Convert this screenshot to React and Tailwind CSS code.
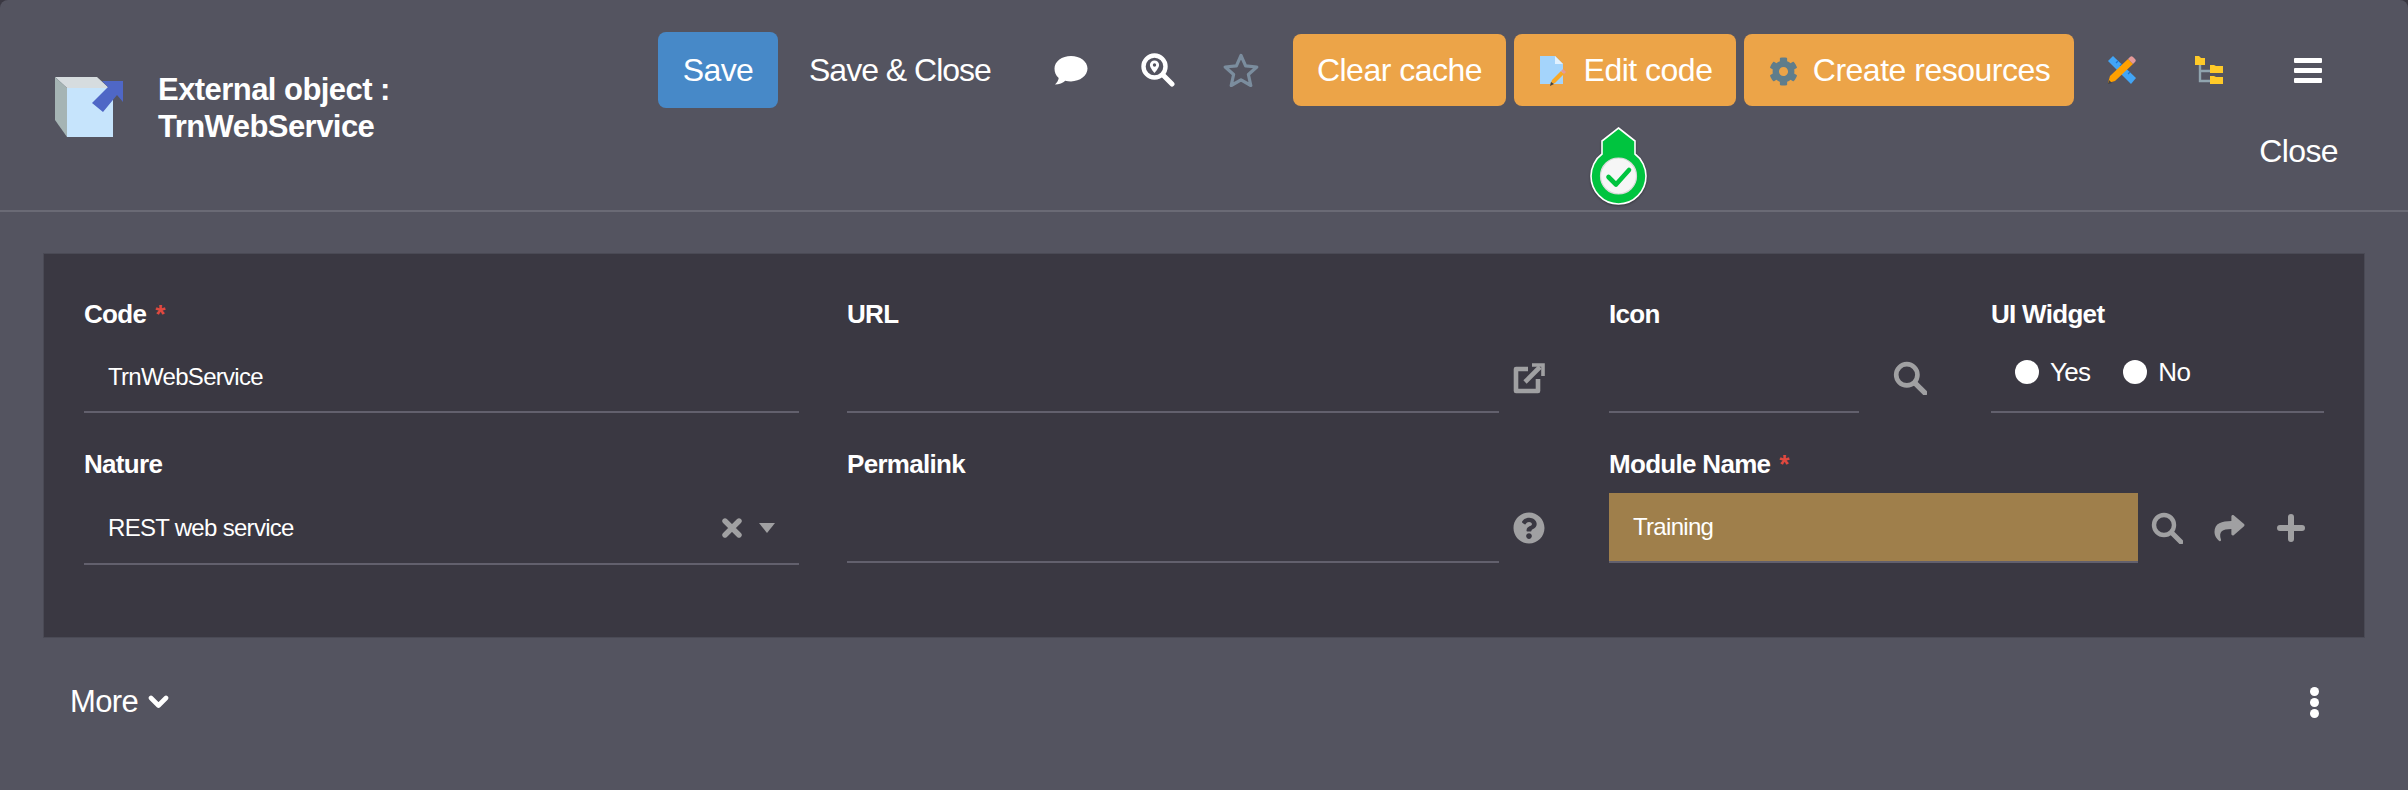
import React from "react";
import { FaCog, FaShare, FaQuestionCircle } from "react-icons/fa";

const font = { fontFamily: '"Liberation Sans", Arial, sans-serif' };

function Search({ className = "" }) {
  return (
    <svg viewBox="0 0 32 32" className={className} fill="none" stroke="#a0a0a2" strokeWidth="4.4" strokeLinecap="round">
      <circle cx="13" cy="13" r="10" />
      <path d="M21 21l9 9" strokeWidth="5" />
    </svg>
  );
}

function CubeIcon() {
  return (
    <svg viewBox="0 0 68 60" className="w-[68px] h-[60px]">
      <path d="M0 0h42l12 11H12z" fill="#d6dcdf" />
      <path d="M0 0l12 11v49L0 43z" fill="#a5b4b4" />
      <path d="M12 11h46v49H12z" fill="#c6e4fc" />
      <path d="M47 4h21v21l-6-7-14 17-11-9 16-16z" fill="#4f67c6" />
    </svg>
  );
}

function Orange({ children, className = "" }) {
  return (
    <button className={"h-[72px] rounded-lg bg-[#eca448] text-white text-[32px] tracking-[-0.5px] flex items-center justify-center " + className}>
      {children}
    </button>
  );
}

function Label({ children, required }) {
  return (
    <div className="text-white font-bold text-[26px] tracking-[-0.7px] leading-[28px] h-[28px]">
      {children}
      {required && <span className="text-[#e0493f] ml-[9px]">*</span>}
    </div>
  );
}

function Underlined({ children, className = "" }) {
  return (
    <div className={"flex items-center border-b-2 border-[#62606d] text-white text-[24px] tracking-[-0.7px] " + className}>
      {children}
    </div>
  );
}

export default function App() {
  return (
    <div className="h-[790px] bg-[#3a3842] overflow-hidden" style={font}>
      <div className="relative h-[790px] rounded-t-lg bg-[#545460]">
        <header className="flex h-[212px] border-b-2 border-[#6a6a75]">
          <div className="w-[658px] shrink-0 flex items-start pt-[77px] pl-[55px]">
            <CubeIcon />
            <div className="ml-[35px] -mt-[6px] text-white font-bold text-[31px] leading-[37px] tracking-[-0.55px]">
              <div>External object :</div>
              <div>TrnWebService</div>
            </div>
          </div>
          <div className="flex-1 flex flex-col">
            <div className="flex items-center h-[76px] mt-[32px]">
              <button className="w-[120px] h-[76px] rounded-lg bg-[#4789c8] text-white text-[32px] tracking-[-0.6px]">Save</button>
              <span className="ml-[31px] w-[181px] text-white text-[32px] tracking-[-1px] whitespace-nowrap">Save &amp; Close</span>
              <svg viewBox="0 0 34 30" className="ml-[64px] w-[34px] h-[30px] -mt-[1px]">
                <path d="M17 1c9 0 16.5 5.4 16.5 12.6S26 26.400 17 26.400c-2 0-4-.3-5.700-.7C9 27.800 5 29.400 1 29.500c2-1.700 3.400-4 3.700-6.500C1.800 20.500.5 17.300.5 13.600.5 6.400 8 1 17 1z" fill="#fff" />
              </svg>
              <svg viewBox="0 0 34 34" className="ml-[53px] w-[34px] h-[34px] -mt-[1px]" fill="none" stroke="#fff" strokeWidth="4.4" strokeLinecap="round">
                <circle cx="13.5" cy="13.5" r="11" />
                <path d="M22 22l9 9" strokeWidth="5" />
                <path d="M13.5 7.5a4.6 4.6 0 0 1 4.6 4.6c0 3-4.6 8-4.6 8s-4.6-5-4.6-8a4.6 4.6 0 0 1 4.6-4.6z" fill="#fff" stroke="none" />
                <circle cx="13.5" cy="12" r="1.7" fill="#545460" stroke="none" />
              </svg>
              <svg viewBox="0 0 36 34" className="ml-[48px] w-[36px] h-[34px] -mt-[1px]" fill="none" stroke="#7b8d9e" strokeWidth="3.2" strokeLinejoin="round">
                <path d="M18 2.5l4.6 10.3 11.2 1.2-8.4 7.5 2.4 11-9.8-5.7-9.8 5.7 2.4-11L2.2 14l11.2-1.2z" />
              </svg>
              <Orange className="ml-[34px] w-[213px]">Clear cache</Orange>
              <Orange className="ml-[8px] w-[222px]">
                <svg viewBox="0 0 26 30" className="w-[26px] h-[30px] mr-[18px] ml-[2px] mt-[2px]">
                  <path d="M0 0h15l8 8v20H0z" fill="#a4d4fb" />
                  <path d="M15 0l8 8h-8z" fill="#e1f1fe" />
                  <path d="M10 29l2-5 9-9 3 3-9 9z" fill="#f9a825" />
                  <path d="M21 15l2-2 3 3-2 2z" fill="#e59a9a" />
                  <path d="M10 30l1-4 3 2z" fill="#444" />
                </svg>
                Edit code
              </Orange>
              <Orange className="ml-[8px] w-[330px] tracking-[-0.4px]">
                <FaCog className="w-[29px] h-[29px] text-[#607d8b] mr-[15px] ml-[1px] mt-[2px]" />
                Create resources
              </Orange>
              <svg viewBox="0 0 28 28" className="ml-[34px] w-[28px] h-[28px]">
                <path d="M5 0l23 22-5 6L0 5z" fill="#42a5f5" />
                <path d="M8 7l2-2M12 10l2-2M16 14l2-2M20 18l2-2" stroke="#1976d2" strokeWidth="1.2" />
                <path d="M0 27l2-7L20 3l5 5L7 25z" fill="#ffa000" />
                <path d="M20 3l2-2c1-1 2-1 3 0l2 2c1 1 1 2 0 3l-2 2z" fill="#e59a9a" />
                <path d="M0 28l1-4 3 3z" fill="#444" />
              </svg>
              <svg viewBox="0 0 28 28" className="ml-[59px] w-[28px] h-[28px]">
                <path d="M5 8v17h10M5 15h10" stroke="#90a4ae" strokeWidth="2.4" fill="none" />
                <path d="M0 0h4l2 2h4v7H0z" fill="#ffca28" />
                <path d="M15 9h4l2 1h7v7H15z" fill="#ffca28" />
                <path d="M15 20h4l2 1h7v7H15z" fill="#ffca28" />
              </svg>
              <div className="ml-[71px] w-[28px] flex flex-col gap-[5px]">
                <div className="h-[5px] bg-white rounded-[1px]" />
                <div className="h-[5px] bg-white rounded-[1px]" />
                <div className="h-[5px] bg-white rounded-[1px]" />
              </div>
            </div>
            <div className="mt-[24px] pr-[70px] text-right text-white text-[32px] tracking-[-0.6px] leading-[38px]">Close</div>
          </div>
        </header>

        <section className="mt-[41px] mx-[43px] h-[385px] bg-[#3a3842] border border-[#4a4a55] pl-[40px] pt-[46px]">
          <div className="flex">
            <div className="w-[715px]">
              <Label required>Code</Label>
              <Underlined className="h-[70px] mt-[15px] pl-[24px]">TrnWebService</Underlined>
            </div>
            <div className="w-[652px] ml-[48px]">
              <Label>URL</Label>
              <Underlined className="h-[70px] mt-[15px]" />
            </div>
            <svg viewBox="0 0 32 32" className="w-[32px] h-[32px] ml-[14px] mt-[62px]" fill="none" stroke="#a0a0a2" strokeWidth="4.6">
              <path d="M15 7H3v22h22V17" strokeLinejoin="round" />
              <path d="M12 20L27 5" />
              <path d="M19 3h11v11" strokeWidth="3.6" />
            </svg>
            <div className="w-[250px] ml-[64px]">
              <Label>Icon</Label>
              <Underlined className="h-[70px] mt-[15px]" />
            </div>
            <Search className="w-[34px] h-[34px] ml-[34px] mt-[61px] shrink-0" />
            <div className="w-[333px] ml-[64px]">
              <Label>UI Widget</Label>
              <Underlined className="h-[70px] mt-[15px] pl-[24px] pb-[10px]">
                <span className="w-[24px] h-[24px] rounded-full bg-white" />
                <span className="ml-[11px] text-[26px]">Yes</span>
                <span className="ml-[33px] w-[24px] h-[24px] rounded-full bg-white" />
                <span className="ml-[11px] text-[26px]">No</span>
              </Underlined>
            </div>
          </div>
          <div className="flex mt-[37px]">
            <div className="w-[715px]">
              <Label>Nature</Label>
              <Underlined className="h-[72px] mt-[15px] pl-[24px] pr-[24px]">
                <span className="flex-1">REST web service</span>
                <svg viewBox="0 0 20 20" className="w-[20px] h-[20px]" stroke="#a0a0a2" strokeWidth="5.4" strokeLinecap="round">
                  <path d="M3 3l14 14M17 3L3 17" />
                </svg>
                <svg viewBox="0 0 16 10" className="ml-[17px] w-[16px] h-[10px]"><path d="M0 0h16l-8 10z" fill="#a0a0a2" /></svg>
              </Underlined>
            </div>
            <div className="w-[652px] ml-[48px]">
              <Label>Permalink</Label>
              <Underlined className="h-[70px] mt-[15px]" />
            </div>
            <FaQuestionCircle className="w-[32px] h-[32px] ml-[14px] mt-[62px] text-[#a0a0a2]" />
            <div className="w-[529px] ml-[64px]">
              <Label required>Module Name</Label>
              <Underlined className="h-[70px] mt-[15px] bg-[#9f7f4b] pl-[24px]">Training</Underlined>
            </div>
            <Search className="w-[32px] h-[32px] ml-[13px] mt-[62px] shrink-0" />
            <FaShare className="w-[35px] h-[30px] ml-[29px] mt-[63px] text-[#a0a0a2]" />
            <svg viewBox="0 0 28 28" className="w-[28px] h-[28px] ml-[30px] mt-[64px]" stroke="#a0a0a2" strokeWidth="6" strokeLinecap="round">
              <path d="M14 3v22M3 14h22" />
            </svg>
          </div>
        </section>

        <footer className="flex items-center justify-between mt-[42px] pl-[70px] pr-[89px]">
          <div className="flex items-center text-white text-[31px] tracking-[-0.6px] leading-[44px]">
            More
            <svg viewBox="0 0 21 14" className="ml-[10px] w-[21px] h-[14px]" fill="none" stroke="#fff" strokeWidth="4.6" strokeLinecap="round" strokeLinejoin="round">
              <path d="M3 3l7.5 7.5L18 3" />
            </svg>
          </div>
          <div className="flex flex-col gap-[2px]">
            <div className="w-[9px] h-[9px] rounded-full bg-white" />
            <div className="w-[9px] h-[9px] rounded-full bg-white" />
            <div className="w-[9px] h-[9px] rounded-full bg-white" />
          </div>
        </footer>

        <svg viewBox="0 0 57 78" className="absolute left-[1590px] top-[127px] w-[57px] h-[78px]" style={{ filter: "drop-shadow(0 1px 1px rgba(0,0,0,.35))" }}>
          <path d="M28.5 1L45 14v13c7 5 11 14 11 22 0 15-12 28-27.5 28S1 64 1 49c0-8 4-17 11-22V14z" fill="#00c43f" stroke="#fff" strokeWidth="1.6" />
          <circle cx="28.5" cy="49" r="18" fill="#f6f6f6" stroke="#d9d9d9" strokeWidth="1.2" />
          <path d="M18.5 50l7.5 7.5L39 43" fill="none" stroke="#00c43f" strokeWidth="4.6" strokeLinecap="round" strokeLinejoin="round" />
        </svg>
      </div>
    </div>
  );
}
